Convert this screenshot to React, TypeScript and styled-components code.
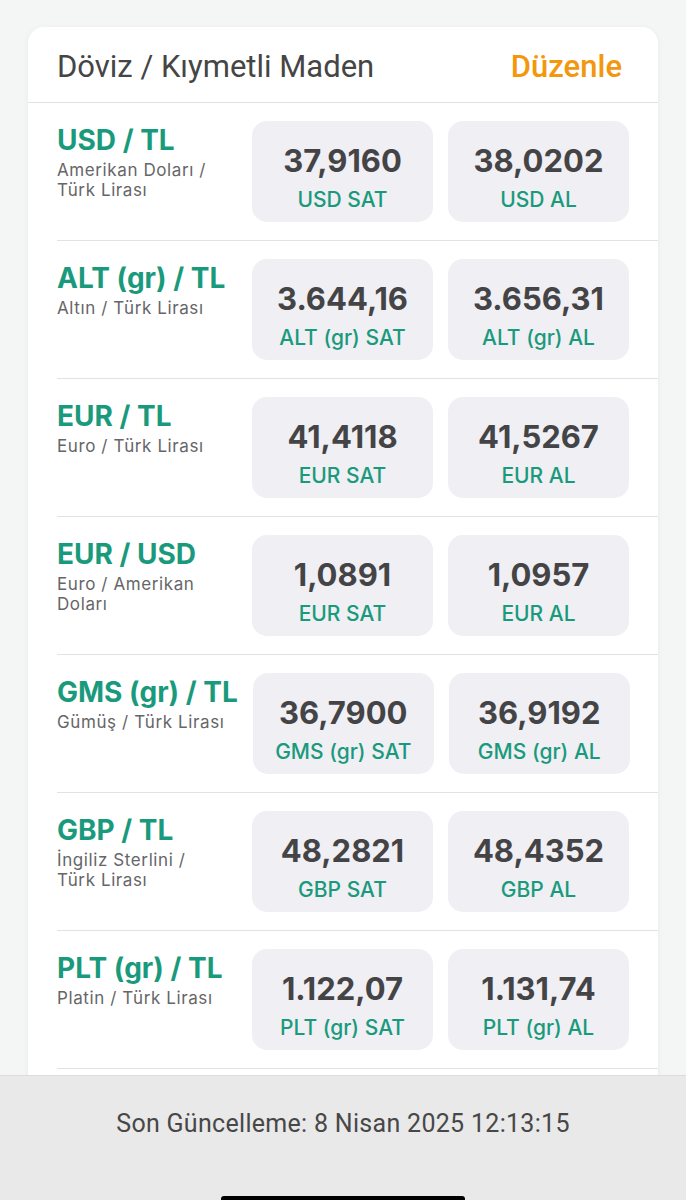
import styled, { createGlobalStyle } from "styled-components";

const GlobalStyle = createGlobalStyle`
  html, body {
    margin: 0;
    padding: 0;
    background: #f4f6f6;
  }
  * {
    box-sizing: border-box;
  }
`;

interface IRate {
  pair: string;
  name: string;
  code: string;
  sell: string;
  buy: string;
}

const rates: IRate[] = [
  { pair: "USD / TL", name: "Amerikan Doları / Türk Lirası", code: "USD", sell: "37,9160", buy: "38,0202" },
  { pair: "ALT (gr) / TL", name: "Altın / Türk Lirası", code: "ALT (gr)", sell: "3.644,16", buy: "3.656,31" },
  { pair: "EUR / TL", name: "Euro / Türk Lirası", code: "EUR", sell: "41,4118", buy: "41,5267" },
  { pair: "EUR / USD", name: "Euro / Amerikan Doları", code: "EUR", sell: "1,0891", buy: "1,0957" },
  { pair: "GMS (gr) / TL", name: "Gümüş / Türk Lirası", code: "GMS (gr)", sell: "36,7900", buy: "36,9192" },
  { pair: "GBP / TL", name: "İngiliz Sterlini / Türk Lirası", code: "GBP", sell: "48,2821", buy: "48,4352" },
  { pair: "PLT (gr) / TL", name: "Platin / Türk Lirası", code: "PLT (gr)", sell: "1.122,07", buy: "1.131,74" },
];

const Page = styled.div`
  width: 686px;
  height: 1200px;
  display: flex;
  flex-direction: column;
  overflow: hidden;
  font-family: Inter, "Noto Sans", sans-serif;
`;

const Main = styled.main`
  height: 1075px;
  flex-shrink: 0;
  overflow: hidden;
  padding: 27px 28px 0;
`;

const Card = styled.section`
  background: #ffffff;
  border-radius: 16px;
  box-shadow: 0 1px 6px rgba(0, 0, 0, 0.05);
  padding-bottom: 40px;
`;

const CardHeader = styled.header`
  height: 76px;
  display: flex;
  justify-content: space-between;
  align-items: center;
  padding: 3px 36px 0 29px;
  border-bottom: 1px solid #e2e2e5;
`;

const CardTitle = styled.h1`
  margin: 0;
  font-family: Roboto, "Noto Sans", sans-serif;
  font-size: 31px;
  font-weight: 400;
  color: #454545;
`;

const EditButton = styled.span`
  font-family: Roboto, "Noto Sans", sans-serif;
  font-size: 31px;
  font-weight: 500;
  color: #f3970f;
`;

const Row = styled.div`
  margin-left: 29px;
  padding: 18px 29px 18px 0;
  height: 138px;
  display: grid;
  grid-template-columns: 1fr 181px 181px;
  column-gap: 15px;
  border-bottom: 1px solid #e2e2e5;
`;

const PairInfo = styled.div`
  display: flex;
  flex-direction: column;
  padding-top: 2px;
`;

const PairTitle = styled.div`
  font-size: 28px;
  font-weight: 700;
  line-height: 34px;
  color: #1a9a7c;
  white-space: nowrap;
`;

const PairName = styled.div`
  font-size: 17px;
  line-height: 20px;
  letter-spacing: 0.6px;
  color: #666668;
  margin-top: 3px;
  padding-right: 10px;
`;

const PriceBox = styled.div`
  background: #efeff4;
  border-radius: 15px;
  display: flex;
  flex-direction: column;
  align-items: center;
  justify-content: center;
  gap: 10px;
  padding-top: 12px;
`;

const PriceValue = styled.div`
  font-size: 31px;
  font-weight: 700;
  line-height: 34px;
  color: #444446;
`;

const PriceLabel = styled.div`
  font-size: 21px;
  font-weight: 500;
  line-height: 24px;
  color: #1a9a7c;
`;

const Footer = styled.footer`
  flex: 1;
  background: #e9e9e9;
  border-top: 1px solid #dcdcdc;
  display: flex;
  flex-direction: column;
  align-items: center;
  padding-top: 33px;
`;

const UpdatedText = styled.div`
  font-family: Roboto, "Noto Sans", sans-serif;
  font-size: 25px;
  letter-spacing: 0.3px;
  color: #474747;
`;

const HomeBar = styled.div`
  margin-top: auto;
  width: 244px;
  height: 4px;
  border-radius: 3px 3px 0 0;
  background: #000;
`;

function RateRow({ rate }: { rate: IRate }) {
  return (
    <Row>
      <PairInfo>
        <PairTitle>{rate.pair}</PairTitle>
        <PairName>{rate.name}</PairName>
      </PairInfo>
      <PriceBox>
        <PriceValue>{rate.sell}</PriceValue>
        <PriceLabel>{rate.code} SAT</PriceLabel>
      </PriceBox>
      <PriceBox>
        <PriceValue>{rate.buy}</PriceValue>
        <PriceLabel>{rate.code} AL</PriceLabel>
      </PriceBox>
    </Row>
  );
}

export default function App() {
  return (
    <Page>
      <GlobalStyle />
      <Main>
        <Card>
          <CardHeader>
            <CardTitle>Döviz / Kıymetli Maden</CardTitle>
            <EditButton>Düzenle</EditButton>
          </CardHeader>
          {rates.map((r) => (
            <RateRow key={r.pair} rate={r} />
          ))}
        </Card>
      </Main>
      <Footer>
        <UpdatedText>Son Güncelleme: 8 Nisan 2025 12:13:15</UpdatedText>
        <HomeBar />
      </Footer>
    </Page>
  );
}
